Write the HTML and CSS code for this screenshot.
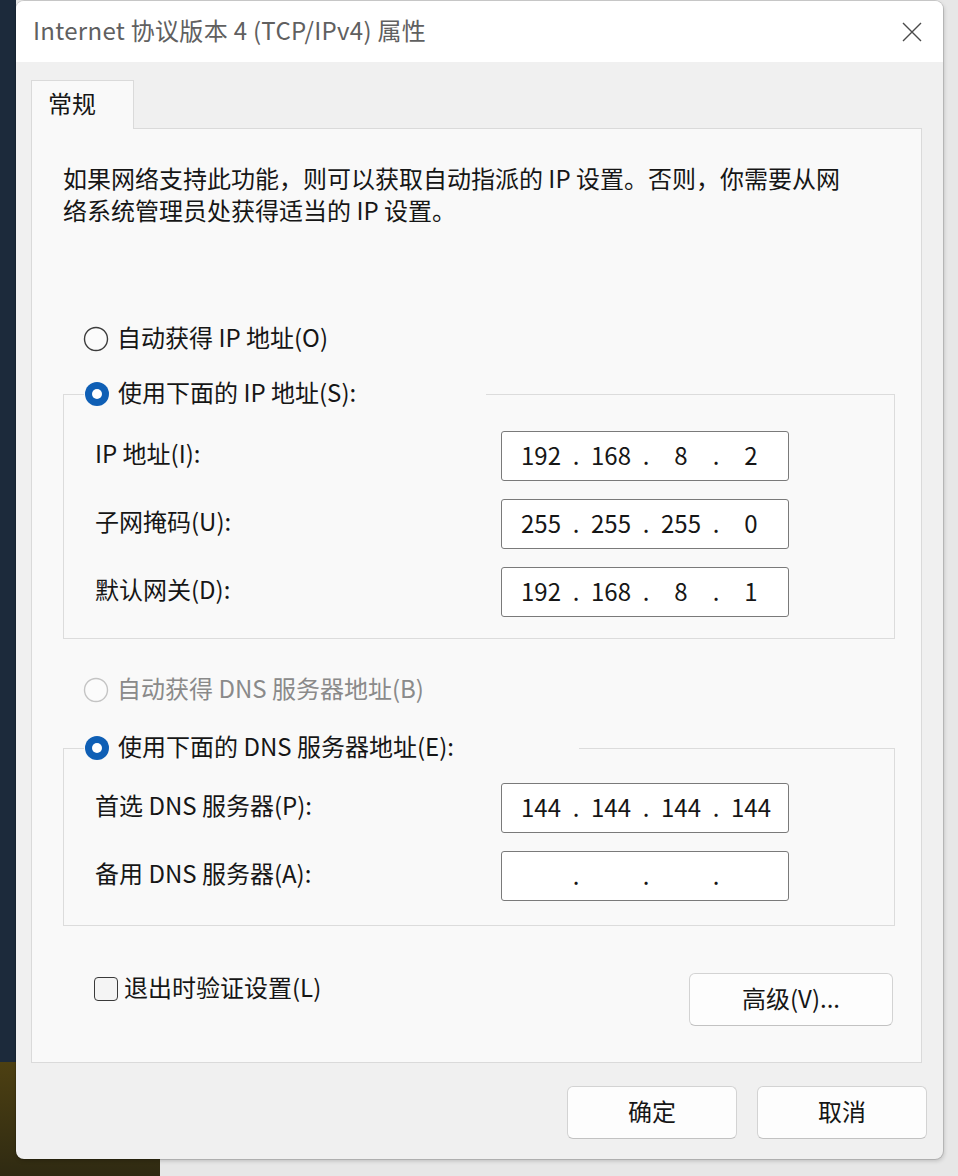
FILE: index.html
```html
<!DOCTYPE html>
<html lang="zh-CN">
<head>
  <meta charset="UTF-8">
  <title>Internet 协议版本 4 (TCP/IPv4) 属性</title>
  <link rel="stylesheet" href="styles.css">
</head>
<body>

  <div class="dialog">
    <div class="titlebar">
      <span class="title">Internet 协议版本 4 (TCP/IPv4) 属性</span>
      <svg class="close" width="20" height="20" viewBox="0 0 20 20">
        <path d="M1 1 L19 19 M19 1 L1 19" stroke="#4a4a4a" stroke-width="1.4" fill="none"/>
      </svg>
    </div>

    <div class="client">
      <div class="tabs">
        <div class="tab">常规</div>
      </div>

      <div class="panel">
        <p class="intro">如果网络支持此功能，则可以获取自动指派的 IP 设置。否则，你需要从网<br>络系统管理员处获得适当的 IP 设置。</p>

        <div class="radio-row first-radio">
          <svg class="radio" width="26" height="26" viewBox="0 0 26 26"><circle cx="13" cy="13" r="11.5" fill="#fbfbfb" stroke="#3c3c3c" stroke-width="1.4"/></svg>
          <span>自动获得 IP 地址(O)</span>
        </div>

        <fieldset class="group group-ip">
          <legend class="radio-row">
            <svg class="radio" width="26" height="26" viewBox="0 0 26 26"><circle cx="13" cy="13" r="12" fill="#0f5fb5"/><circle cx="13" cy="13" r="5" fill="#fff"/></svg>
            <span>使用下面的 IP 地址(S):</span>
          </legend>
          <div class="field">
            <span class="label">IP 地址(I):</span>
            <div class="ipbox"><span>192</span><i>.</i><span>168</span><i>.</i><span>8</span><i>.</i><span>2</span></div>
          </div>
          <div class="field">
            <span class="label">子网掩码(U):</span>
            <div class="ipbox"><span>255</span><i>.</i><span>255</span><i>.</i><span>255</span><i>.</i><span>0</span></div>
          </div>
          <div class="field">
            <span class="label">默认网关(D):</span>
            <div class="ipbox"><span>192</span><i>.</i><span>168</span><i>.</i><span>8</span><i>.</i><span>1</span></div>
          </div>
        </fieldset>

        <div class="radio-row disabled dns-auto">
          <svg class="radio" width="26" height="26" viewBox="0 0 26 26"><circle cx="13" cy="13" r="11.5" fill="#fbfbfb" stroke="#c4c4c4" stroke-width="1.4"/></svg>
          <span>自动获得 DNS 服务器地址(B)</span>
        </div>

        <fieldset class="group group-dns">
          <legend class="radio-row">
            <svg class="radio" width="26" height="26" viewBox="0 0 26 26"><circle cx="13" cy="13" r="12" fill="#0f5fb5"/><circle cx="13" cy="13" r="5" fill="#fff"/></svg>
            <span>使用下面的 DNS 服务器地址(E):</span>
          </legend>
          <div class="field">
            <span class="label">首选 DNS 服务器(P):</span>
            <div class="ipbox"><span>144</span><i>.</i><span>144</span><i>.</i><span>144</span><i>.</i><span>144</span></div>
          </div>
          <div class="field">
            <span class="label">备用 DNS 服务器(A):</span>
            <div class="ipbox"><span></span><i>.</i><span></span><i>.</i><span></span><i>.</i><span></span></div>
          </div>
        </fieldset>

        <div class="bottom-row">
          <div class="check-row">
            <span class="checkbox"></span>
            <span>退出时验证设置(L)</span>
          </div>
          <button class="btn btn-advanced">高级(V)...</button>
        </div>
      </div>

      <div class="footer">
        <button class="btn">确定</button>
        <button class="btn">取消</button>
      </div>
    </div>
  </div>

</body>
</html>
```

FILE: styles.css
```css
body {
  margin: 0;
  width: 958px;
  height: 1176px;
  overflow: hidden;
  font-family: "Noto Sans CJK SC", "Noto Sans", sans-serif;
  font-size: 24px;
  color: #161616;
  background:
    linear-gradient(#1c2a3b, #1c2a3b) 0 0 / 16px 1062px no-repeat,
    linear-gradient(#4d4012, #2f2a12) 0 1062px / 160px 114px no-repeat,
    #e7e7e7;
}

.dialog {
  margin: 1px 0 0 16px;
  width: 927px;
  background: #f0f0f0;
  border-radius: 8px;
  overflow: hidden;
  box-shadow: 0 0 0 1px rgba(0, 0, 0, 0.12), 1px 2px 4px rgba(0, 0, 0, 0.18);
}

.titlebar {
  height: 61px;
  background: #ffffff;
  display: flex;
  align-items: center;
  justify-content: space-between;
  padding: 0 21px 0 17px;
}

.title {
  color: #606060;
  font-size: 24px;
  line-height: 28px;
  letter-spacing: 0.3px;
  padding-bottom: 4px;
}

.close {
  display: block;
}

.client {
  padding: 18px 21px 20px 15px;
}

.tabs {
  display: flex;
}

.tab {
  position: relative;
  z-index: 1;
  width: 85px;
  height: 48px;
  padding-left: 16px;
  margin-bottom: -1px;
  line-height: 44px;
  background: #f9f9f9;
  border: 1px solid #dadada;
  border-bottom: none;
}

.panel {
  background: #f9f9f9;
  border: 1px solid #dadada;
  padding: 33px 26px 36px 31px;
}

.intro {
  margin: 0;
  line-height: 32px;
}

.radio-row {
  display: flex;
  align-items: center;
  height: 32px;
  margin-left: 20px;
}

.radio-row span {
  line-height: 28px;
  padding-bottom: 4px;
}

.radio {
  display: block;
  margin-right: 8px;
}

.first-radio {
  margin-top: 97px;
}

.disabled {
  color: #8a8a8a;
}

.dns-auto {
  margin-top: 35px;
}

.group {
  margin: 0;
  padding: 0 0 20px 0;
  border: 1px solid #dcdcdc;
  min-width: 0;
}

.group legend {
  padding: 0 1px 0 0;
  margin-left: 20px;
}

.group-ip {
  margin-top: 23px;
  padding-bottom: 21px;
}

.group-ip legend {
  width: 401px;
}

.group-dns {
  margin-top: 26px;
  padding-bottom: 24px;
}

.group-dns legend {
  width: 494px;
}

.group-ip .field:first-of-type {
  margin-top: 21px;
}

.group-dns .field:first-of-type {
  margin-top: 19px;
}

.field {
  display: flex;
  align-items: center;
  margin-top: 18px;
  padding-left: 31px;
}

.label {
  width: 406px;
  line-height: 28px;
  padding-bottom: 6px;
}

.ipbox {
  width: 278px;
  height: 44px;
  padding: 0 0 4px 8px;
  display: flex;
  align-items: center;
  background: #ffffff;
  border: 1px solid #7a7a7a;
  border-radius: 3px;
}

.ipbox span {
  width: 62px;
  text-align: center;
}

.ipbox i {
  font-style: normal;
  width: 8px;
  text-align: center;
}

.bottom-row {
  display: flex;
  justify-content: space-between;
  align-items: flex-start;
  margin-top: 47px;
}

.check-row {
  display: flex;
  align-items: center;
  height: 32px;
  margin-left: 31px;
}

.check-row span:last-child {
  line-height: 28px;
  padding-bottom: 4px;
}

.checkbox {
  width: 22px;
  height: 22px;
  border: 1.5px solid #3a3a3a;
  border-radius: 4px;
  background: #f4f4f4;
  margin-right: 6px;
}

.btn {
  font-family: "Noto Sans CJK SC", "Noto Sans", sans-serif;
  font-size: 24px;
  color: #161616;
  background: #fdfdfd;
  border: 1px solid #d3d3d3;
  border-bottom-color: #c2c2c2;
  border-radius: 6px;
  height: 53px;
  width: 170px;
  padding: 0 0 4px 0;
}

.btn-advanced {
  width: 204px;
  margin-right: 2px;
}

.footer {
  display: flex;
  justify-content: flex-end;
  gap: 20px;
  margin-top: 23px;
  margin-right: -5px;
}
```
